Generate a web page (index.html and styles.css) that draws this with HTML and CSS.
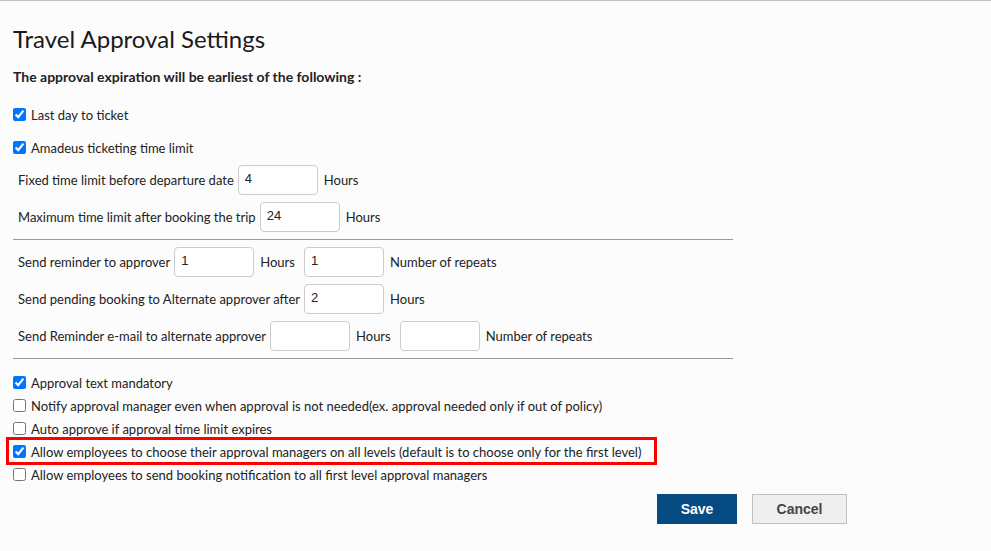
FILE: index.html
```html
<!DOCTYPE html>
<html lang="en">
<head>
  <meta charset="UTF-8" />
  <title>Travel Approval Settings</title>
  <link rel="stylesheet" href="styles.css">
</head>
<body>
  <div class="page">
    <h1>Travel Approval Settings</h1>
    <p class="lead">The approval expiration will be earliest of the following :</p>

    <label class="check first"><input type="checkbox" checked> Last day to ticket</label>
    <label class="check gap"><input type="checkbox" checked> Amadeus ticketing time limit</label>

    <div class="field-row top">
      <span class="lbl">Fixed time limit before departure date</span>
      <input type="text" class="num" value="4">
      <span class="unit">Hours</span>
    </div>
    <div class="field-row">
      <span class="lbl">Maximum time limit after booking the trip</span>
      <input type="text" class="num" value="24">
      <span class="unit">Hours</span>
    </div>

    <hr class="sep">

    <div class="field-row top">
      <span class="lbl">Send reminder to approver</span>
      <input type="text" class="num" value="1">
      <span class="unit">Hours</span>
      <input type="text" class="num" value="1">
      <span class="unit">Number of repeats</span>
    </div>
    <div class="field-row">
      <span class="lbl">Send pending booking to Alternate approver after</span>
      <input type="text" class="num" value="2">
      <span class="unit">Hours</span>
    </div>
    <div class="field-row">
      <span class="lbl">Send Reminder e-mail to alternate approver</span>
      <input type="text" class="num" value="">
      <span class="unit">Hours</span>
      <input type="text" class="num" value="">
      <span class="unit">Number of repeats</span>
    </div>

    <hr class="sep">

    <div class="options">
      <label class="check"><input type="checkbox" checked> Approval text mandatory</label>
      <label class="check"><input type="checkbox"> Notify approval manager even when approval is not needed(ex. approval needed only if out of policy)</label>
      <label class="check"><input type="checkbox"> Auto approve if approval time limit expires</label>
      <label class="check highlight"><input type="checkbox" checked> Allow employees to choose their approval managers on all levels (default is to choose only for the first level)</label>
      <label class="check"><input type="checkbox"> Allow employees to send booking notification to all first level approval managers</label>
    </div>

    <div class="actions">
      <button class="btn btn-save">Save</button>
      <button class="btn btn-cancel">Cancel</button>
    </div>
  </div>
</body>
</html>
```

FILE: styles.css
```css
body {
  margin: 0;
  background: #fcfcfc;
  border-top: 1px solid #c3c3c3;
  font-family: Lato, "Open Sans", sans-serif;
  font-size: 13px;
  color: #222;
}
.page {
  padding: 0 13px;
}
h1 {
  margin: 23px 0 0;
  font-size: 24px;
  line-height: 29px;
  font-weight: normal;
  color: #1a1a1a;
}
.lead {
  margin: 14px 0 0;
  font-size: 14px;
  font-weight: bold;
  line-height: 20px;
}
.check {
  display: flex;
  align-items: center;
  height: 23px;
  white-space: nowrap;
}
.check input {
  width: 13px;
  height: 13px;
  margin: 0 5px 0 0;
}
.check.first {
  margin-top: 16px;
}
.check.gap {
  margin-top: 10px;
}
.field-row {
  display: flex;
  align-items: center;
  height: 30px;
  margin-top: 7px;
  padding-left: 5px;
  white-space: nowrap;
}
.field-row.top {
  margin-top: 6px;
}
.sep + .field-row.top {
  margin-top: 7px;
}
.num {
  box-sizing: border-box;
  width: 80px;
  height: 30px;
  margin: 0 6px 0 4px;
  padding: 0 6px 3px;
  border: 1px solid #ccc;
  border-radius: 4px;
  background: #fff;
  font-family: "Liberation Sans", Arial, sans-serif;
  font-size: 13px;
  color: #222;
}
.unit {
  margin-right: 5px;
}
.sep {
  width: 720px;
  margin: 7px 0 0;
  border: 0;
  border-top: 1px solid #999;
  height: 0;
}
.options {
  margin-top: 12px;
}
.options .check {
  width: max-content;
}
.highlight {
  position: relative;
}
.highlight::after {
  content: "";
  position: absolute;
  left: -7px;
  right: -16px;
  top: -3px;
  bottom: -2px;
  border: 3px solid #f00;
}
.actions {
  display: flex;
  justify-content: flex-end;
  gap: 15px;
  width: 834px;
  margin-top: 8px;
}
.btn {
  height: 30px;
  font-family: "Liberation Sans", Arial, sans-serif;
  font-size: 14px;
  cursor: pointer;
}
.btn-save {
  width: 80px;
  border: none;
  background: #054a80;
  color: #fff;
  font-weight: bold;
}
.btn-cancel {
  width: 95px;
  border: 1px solid #c0c0c0;
  background: #efefef;
  color: #444;
  font-weight: bold;
}
```
